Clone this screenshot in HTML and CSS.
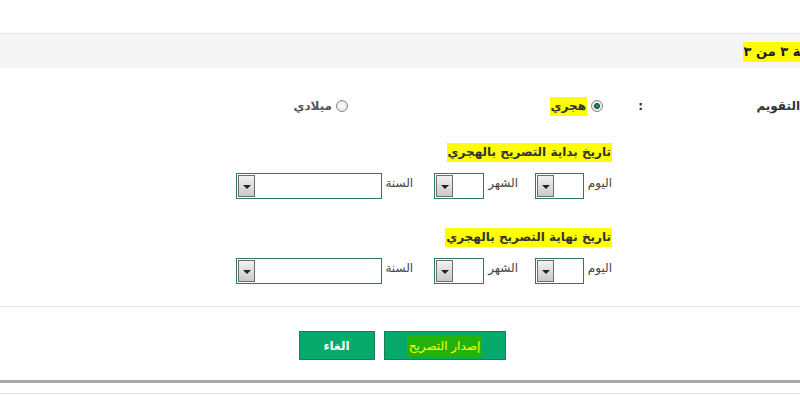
FILE: index.html
```html
<!DOCTYPE html>
<html lang="ar" dir="rtl">
<head>
    <meta charset="UTF-8">
    <title>إصدار التصريح</title>
    <link rel="stylesheet" href="styles.css">
</head>
<body>
    <div class="top"></div>

    <!-- عنوان الخطوة -->
    <div class="band">
        <h3 class="step-title"><span class="mark">صفحة ٣ من ٣</span></h3>
    </div>

    <div class="form">
        <!-- التقويم -->
        <div class="cal-row">
            <div class="cal-label">التقويم</div>
            <div class="colon">:</div>
            <label class="opt">
                <span class="radio checked"></span>
                <span class="mark">هجري</span>
            </label>
            <label class="opt">
                <span class="radio"></span>
                <span class="opt-text">ميلادي</span>
            </label>
        </div>

        <!-- تاريخ البداية -->
        <div class="date-block">
            <h4 class="date-title"><span class="mark">تاريخ بداية التصريح بالهجري</span></h4>
            <div class="date-row">
                <div class="group g-day">
                    <span class="g-label">اليوم</span>
                    <div class="sel sel-day"><span class="sel-btn"></span></div>
                </div>
                <div class="group g-month">
                    <span class="g-label">الشهر</span>
                    <div class="sel sel-month"><span class="sel-btn"></span></div>
                </div>
                <div class="group g-year">
                    <span class="g-label">السنة</span>
                    <div class="sel sel-year"><span class="sel-btn"></span></div>
                </div>
            </div>
        </div>

        <!-- تاريخ النهاية -->
        <div class="date-block second">
            <h4 class="date-title"><span class="mark">تاريخ نهاية التصريح بالهجري</span></h4>
            <div class="date-row">
                <div class="group g-day">
                    <span class="g-label">اليوم</span>
                    <div class="sel sel-day"><span class="sel-btn"></span></div>
                </div>
                <div class="group g-month">
                    <span class="g-label">الشهر</span>
                    <div class="sel sel-month"><span class="sel-btn"></span></div>
                </div>
                <div class="group g-year">
                    <span class="g-label">السنة</span>
                    <div class="sel sel-year"><span class="sel-btn"></span></div>
                </div>
            </div>
        </div>
    </div>

    <!-- الأزرار -->
    <div class="actions">
        <button class="btn btn-issue"><span class="mark-green">إصدار التصريح</span></button>
        <button class="btn">الغاء</button>
    </div>

    <div class="bottom"></div>
</body>
</html>
```

FILE: styles.css
```css
/* أساسي */
* {
    margin: 0;
    padding: 0;
    box-sizing: border-box;
}

body {
    width: 800px;
    height: 395px;
    overflow: hidden;
    background: #fff;
    color: #333;
    font-family: 'DejaVu Sans', sans-serif;
    font-size: 12px;
}

.mark {
    background: #ffff00;
    padding: 2px 1px 3px;
}

/* الشريط العلوي */
.top {
    height: 34px;
    border-bottom: 1px solid #e5e5e5;
}

.band {
    height: 34px;
    background: #f5f5f5;
    display: flex;
    align-items: center;
    overflow: hidden;
}

.step-title {
    font-size: 13px;
    font-weight: bold;
    color: #222;
    white-space: nowrap;
    margin-right: -33px;
}

/* النموذج */
.form {
    padding-top: 27px;
}

.cal-row {
    display: flex;
    align-items: center;
    height: 22px;
    font-weight: bold;
}

.cal-label {
    width: 157px;
    color: #333;
}

.colon {
    width: 5px;
    margin-left: 35px;
}

.opt {
    width: 255px;
    display: flex;
    align-items: center;
    gap: 4px;
}

.opt-text {
    color: #555;
}

.radio {
    width: 12px;
    height: 12px;
    border-radius: 50%;
    border: 1px solid #888;
    background: radial-gradient(circle, #fff 0, #ddd 100%);
    position: relative;
}

.radio.checked::after {
    content: "";
    position: absolute;
    top: 2px;
    right: 2px;
    width: 6px;
    height: 6px;
    border-radius: 50%;
    background: #1f8f5a;
    border: 1px solid #135;
    box-sizing: border-box;
}

/* التواريخ */
.date-block {
    padding-right: 188px;
    margin-top: 24px;
}

.date-block.second {
    margin-top: 27px;
}

.date-title {
    font-size: 12px;
    font-weight: bold;
    color: #333;
    height: 22px;
    line-height: 22px;
}

.date-row {
    display: flex;
    margin-top: 10px;
}

.group {
    display: flex;
    align-items: flex-start;
}

.g-label {
    color: #444;
    font-size: 12px;
    line-height: 12px;
    padding-top: 4px;
}

.g-day .g-label {
    width: 28px;
}

.g-month {
    margin-right: 17px;
}

.g-month .g-label {
    margin-left: 4px;
}

.g-year {
    margin-right: 21px;
}

.g-year .g-label {
    margin-left: 3px;
}

.sel {
    height: 26px;
    border: 1px solid #2d7a5d;
    background: #fff;
    display: flex;
    flex-direction: row-reverse;
    padding: 1px;
}

.sel-day {
    width: 49px;
}

.sel-month {
    width: 50px;
}

.sel-year {
    width: 146px;
}

.sel-btn {
    width: 17px;
    height: 22px;
    border: 1px solid #6d6d6d;
    background: linear-gradient(#f2f2f2, #c9c9c9);
    position: relative;
}

.sel-btn::after {
    content: "";
    position: absolute;
    top: 9px;
    left: 4px;
    border-top: 4px solid #222;
    border-left: 4px solid transparent;
    border-right: 4px solid transparent;
}

/* الأزرار */
.actions {
    border-top: 1px solid #e5e5e5;
    margin-top: 22px;
    padding-top: 24px;
    display: flex;
    justify-content: center;
    gap: 9px;
    padding-left: 4px;
}

.btn {
    height: 29px;
    width: 76px;
    background: #07a86b;
    border: 1px solid #1b7e59;
    color: #fff;
    font-family: 'DejaVu Sans', sans-serif;
    font-size: 12px;
    font-weight: bold;
}

.btn-issue {
    width: 122px;
    font-weight: normal;
}

.mark-green {
    background: #22b20b;
    color: #ffff00;
    padding: 4px 2px;
}

.bottom {
    margin-top: 20px;
    height: 14px;
    border-top: 3px solid #a9a9a9;
    border-bottom: 1px solid #e0e0e0;
}
```
